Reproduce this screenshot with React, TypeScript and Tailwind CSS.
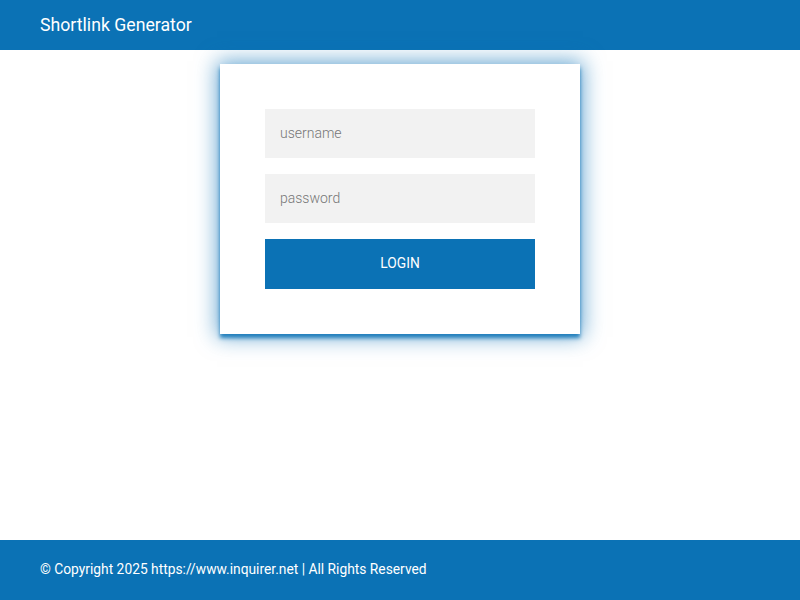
import React from "react";

export default function App() {
  return (
    <div className="min-h-screen flex flex-col bg-white" style={{ fontFamily: "Roboto, 'Liberation Sans', sans-serif" }}>
      <header className="h-[50px] bg-[#0b72b5] flex items-center px-10 shrink-0">
        <span className="text-white text-[17.7px] font-normal leading-none pt-[2px]">Shortlink Generator</span>
      </header>
      <main className="flex-1 flex justify-center items-start pt-[14px]">
        <div className="w-[360px] bg-white px-[45px] pt-[45px] pb-[45px] flex flex-col gap-[16px] shadow-[0_0_20px_3px_rgba(11,114,181,0.6),0_4px_4px_0_rgba(11,114,181,0.85)]">
          <input
            placeholder="username"
            className="w-full h-[49px] bg-[#f2f2f2] px-[15px] pb-[2px] text-[14px] text-[#555] placeholder:text-[#777] font-light outline-none"
          />
          <input
            type="password"
            placeholder="password"
            className="w-full h-[49px] bg-[#f2f2f2] px-[15px] pb-[2px] text-[14px] text-[#555] placeholder:text-[#777] font-light outline-none"
          />
          <button className="w-full h-[50px] bg-[#0b72b5] text-white text-[13.8px] uppercase pb-[2px]">LOGIN</button>
        </div>
      </main>
      <footer className="h-[60px] bg-[#0b72b5] flex items-center px-10 shrink-0">
        <span className="text-white text-[13.8px] leading-none">© Copyright 2025 https://www.inquirer.net | All Rights Reserved</span>
      </footer>
    </div>
  );
}
